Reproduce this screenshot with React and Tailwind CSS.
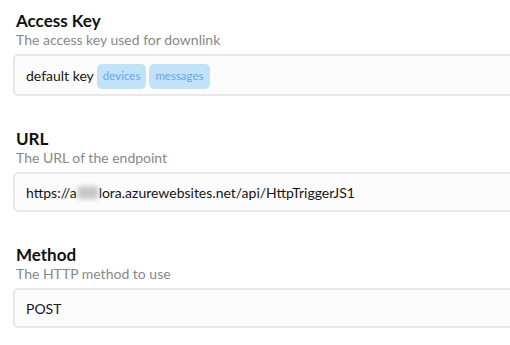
import React from "react";

function Section({ title, desc, children, className = "" }) {
  return (
    <div className={className}>
      <div className="text-[17px] leading-[20px] font-bold text-[#111] pl-[3px]">
        {title}
      </div>
      <div className="text-[14px] leading-[17px] text-[#888888] pl-[3px]">{desc}</div>
      {children}
    </div>
  );
}

function Box({ children, h }) {
  return (
    <div
      className={`mt-[6px] w-[540px] border-2 border-[#e8e8e8] rounded-[5px] bg-[#fcfcfc] flex items-center pl-[11px] text-[14px] text-[#141414] ${h}`}
    >
      {children}
    </div>
  );
}

export default function App() {
  return (
    <div
      className="w-[510px] h-[345px] overflow-hidden bg-white pl-[13px] pt-[11px]"
      style={{ fontFamily: 'Lato, "Open Sans", sans-serif' }}
    >
      <Section title="Access Key" desc="The access key used for downlink">
        <Box h="h-[42px]">
          <span className="mr-[3px]">default key</span>
          <span className="mt-[2px] h-[25px] flex items-center rounded-[5px] bg-[#c2e2fa] text-[#6aa6e6] text-[11.5px] px-[6px] mr-[3px]">
            devices
          </span>
          <span className="mt-[2px] h-[25px] flex items-center rounded-[5px] bg-[#c2e2fa] text-[#6aa6e6] text-[11.5px] px-[6px]">
            messages
          </span>
        </Box>
      </Section>

      <Section className="mt-[33px]" title="URL" desc="The URL of the endpoint">
        <Box h="h-[40px]">
          <span>https://a</span>
          <span className="inline-block w-[20px] h-[13px] bg-[#c8c8c8] blur-[2px] mx-[1px]"></span>
          <span>lora.azurewebsites.net/api/HttpTriggerJS1</span>
        </Box>
      </Section>

      <Section className="mt-[33px]" title="Method" desc="The HTTP method to use">
        <Box h="h-[40px]">
          <span>POST</span>
        </Box>
      </Section>
    </div>
  );
}
